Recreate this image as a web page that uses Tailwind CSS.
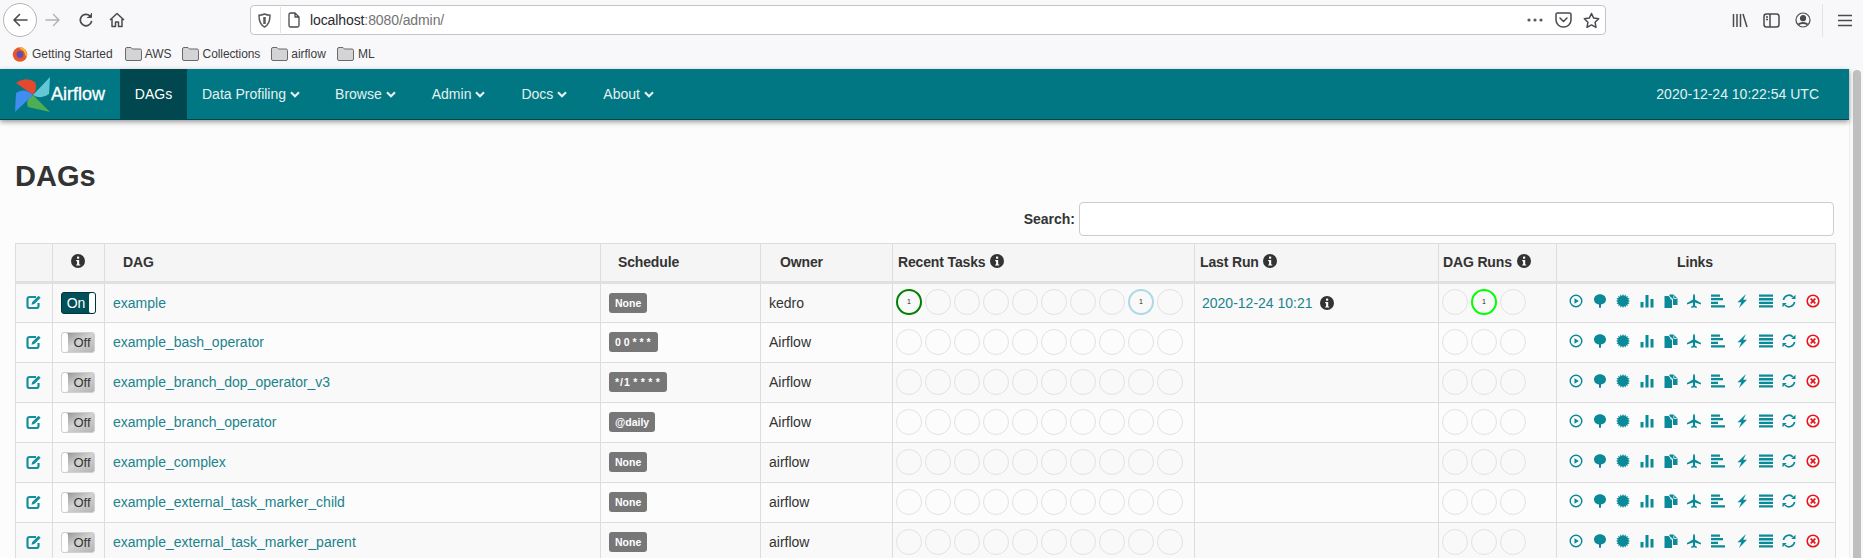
<!doctype html>
<html>
<head>
  <meta charset="UTF-8">
  <title>Airflow - DAGs</title>
  <script src="https://cdn.jsdelivr.net/npm/@tailwindcss/browser@4"></script>
</head>
<body class="w-[1863px] h-[558px] overflow-hidden bg-[#fcfcfc] text-[#333] text-[14px] font-['Liberation_Sans',Arial,sans-serif]">

  <!-- browser chrome -->
  <div class="h-[69px] bg-[#f8f8fa] text-[#4a4a4f]">
    <div class="h-[40px] flex items-center relative">
      <div class="absolute left-[3px] top-[3px] w-[34px] h-[34px] rounded-full border border-[#b5b5b8] bg-white"></div>
      <svg class="absolute left-[12px] top-[12px]" width="16" height="16" viewBox="0 0 16 16" fill="none" stroke="#4a4a4f" stroke-width="1.6" stroke-linecap="round" stroke-linejoin="round"><path d="M15 8H2M7.5 2.5 2 8l5.500 5.500"/></svg>
      <svg class="ml-[45px]" width="16" height="16" viewBox="0 0 16 16" fill="none" stroke="#b1b1b3" stroke-width="1.4" stroke-linecap="round" stroke-linejoin="round"><path d="M1 8h13M8.500 2.500 14 8l-5.500 5.500"/></svg>
      <svg class="ml-[17px]" width="16" height="16" viewBox="0 0 16 16" fill="none" stroke="#4a4a4f" stroke-width="1.700" stroke-linecap="round" stroke-linejoin="round"><path d="M13.500 9.500A5.700 5.700 0 1 1 12 4"/><path d="M13.500 1.500V5.500H9.500" fill="#4a4a4f" stroke-width="1"/></svg>
      <svg class="ml-[15px]" width="16" height="16" viewBox="0 0 16 16" fill="none" stroke="#4a4a4f" stroke-width="1.500" stroke-linejoin="round"><path d="M1 8 8 1.500 15 8M3 7v7.500h3.500V10h3v4.500H13V7"/></svg>
      <!-- url bar -->
      <div class="ml-[125px] w-[1356px] h-[30px] flex items-center bg-white border border-[#c4c4c6] rounded-[4px]">
        <svg class="ml-[7px]" width="13" height="15" viewBox="0 0 13 15" fill="none" stroke="#5a5a5e" stroke-width="1.500"><path d="M6.500 1C4.500 2 2.500 2.200 1 2.200 1 8 2.500 12 6.500 14 10.500 12 12 8 12 2.200 10.500 2.200 8.500 2 6.500 1Z"/><path d="M6.500 4v7" stroke-width="2.500"/></svg>
        <div class="ml-[9px] w-px h-[26px] bg-[#e4e4e6]"></div>
        <svg class="ml-[7px]" width="12" height="16" viewBox="0 0 12 16" fill="none" stroke="#4a4a4f" stroke-width="1.300" stroke-linejoin="round"><path d="M1 2.500A1.500 1.500 0 0 1 2.500 1H7l4 4v8.500a1.500 1.500 0 0 1-1.500 1.500h-7A1.500 1.500 0 0 1 1 13.500ZM7 1v4h4"/></svg>
        <span class="ml-[10px] text-[#2a2a2e] tracking-[-0.1px]">localhost<span class="text-[#737373]">:8080/admin/</span></span>
        <div class="ml-auto flex items-center">
          <svg width="18" height="4" viewBox="0 0 18 4" fill="#5a5a5e"><circle cx="3" cy="2" r="1.600"/><circle cx="9" cy="2" r="1.600"/><circle cx="15" cy="2" r="1.600"/></svg>
          <svg class="ml-[11px]" width="17" height="16" viewBox="0 0 17 16" fill="none" stroke="#4a4a4f" stroke-width="1.500" stroke-linejoin="round" stroke-linecap="round"><path d="M1 2.500A1.500 1.500 0 0 1 2.500 1h12A1.500 1.500 0 0 1 16 2.500V8a7.500 7 0 0 1-15 0Z"/><path d="m5 6 3.500 3.500L12 6"/></svg>
          <svg class="ml-[11px] mr-[5px]" width="17" height="17" viewBox="0 0 17 17" fill="none" stroke="#4a4a4f" stroke-width="1.500" stroke-linejoin="round"><path d="m8.500 1.500 2.200 4.600 5 .7-3.600 3.500.9 5-4.500-2.400L4 15.300l.9-5L1.300 6.800l5-.7Z"/></svg>
        </div>
      </div>
      <!-- toolbar right -->
      <svg class="ml-[126px]" width="16" height="15" viewBox="0 0 16 15" fill="none" stroke="#4a4a4f" stroke-width="1.500"><path d="M1.500 1v13M5 1v13M8.500 1v13M11 1l4 13"/></svg>
      <svg class="ml-[15px]" width="17" height="15" viewBox="0 0 17 15" fill="none" stroke="#4a4a4f" stroke-width="1.500"><rect x="1" y="1" width="15" height="13" rx="2.500"/><path d="M7 1v13M3 4h2M3 6.500h2"/></svg>
      <svg class="ml-[15px]" width="16" height="16" viewBox="0 0 16 16" fill="none" stroke="#4a4a4f" stroke-width="1.200"><circle cx="8" cy="8" r="7"/><circle cx="8" cy="6.200" r="2.500" fill="#4a4a4f"/><path d="M3.500 12.500C5.500 10.500 10.500 10.500 12.500 12.500" stroke-width="1.800"/></svg>
      <div class="ml-[11px] w-px h-[33px] bg-[#e4e4e6]"></div>
      <svg class="ml-[15px]" width="14" height="13" viewBox="0 0 14 13" fill="none" stroke="#4a4a4f" stroke-width="1.600"><path d="M0 1.500h14M0 6.500h14M0 11.500h14"/></svg>
    </div>
    <div class="h-[27px] flex items-center text-[12px] text-[#3c3c40]">
      <svg class="ml-[12px]" width="16" height="16" viewBox="0 0 15 15"><circle cx="7.500" cy="8" r="6.800" fill="#e8562a"/><path d="M7.500 1C11 1 14 4 14 8c0 1-.2 2-.6 2.800L11 5 7 2Z" fill="#ffb32c"/><circle cx="7.500" cy="8" r="3.200" fill="#5b4fb8"/></svg>
      <span class="ml-[4px]">Getting Started</span>
      <svg class="ml-[12px]" width="17" height="14" viewBox="0 0 17 14"><path d="M.5 2A1.500 1.500 0 0 1 2 .5h4l1.500 1.500H15A1.500 1.500 0 0 1 16.500 3.500V12A1.500 1.500 0 0 1 15 13.500H2A1.500 1.500 0 0 1 .5 12Z" fill="#d4d4d6" stroke="#6a6a6e"/></svg>
      <span class="ml-[3px]">AWS</span>
      <svg class="ml-[10px]" width="17" height="14" viewBox="0 0 17 14"><path d="M.5 2A1.500 1.500 0 0 1 2 .5h4l1.500 1.500H15A1.500 1.500 0 0 1 16.500 3.500V12A1.500 1.500 0 0 1 15 13.500H2A1.500 1.500 0 0 1 .5 12Z" fill="#d4d4d6" stroke="#6a6a6e"/></svg>
      <span class="ml-[4px] tracking-[-0.1px]">Collections</span>
      <svg class="ml-[11px]" width="17" height="14" viewBox="0 0 17 14"><path d="M.5 2A1.500 1.500 0 0 1 2 .5h4l1.500 1.500H15A1.500 1.500 0 0 1 16.500 3.500V12A1.500 1.500 0 0 1 15 13.500H2A1.500 1.500 0 0 1 .5 12Z" fill="#d4d4d6" stroke="#6a6a6e"/></svg>
      <span class="ml-[3px]">airflow</span>
      <svg class="ml-[11px]" width="17" height="14" viewBox="0 0 17 14"><path d="M.5 2A1.500 1.500 0 0 1 2 .5h4l1.500 1.500H15A1.500 1.500 0 0 1 16.500 3.500V12A1.500 1.500 0 0 1 15 13.500H2A1.500 1.500 0 0 1 .5 12Z" fill="#d4d4d6" stroke="#6a6a6e"/></svg>
      <span class="ml-[4px]">ML</span>
    </div>
  </div>

  <div class="flex h-[489px]">
    <main class="w-[1849px] shrink-0">
      <!-- navbar -->
      <nav class="relative h-[51px] flex items-stretch bg-[#007782] border-b border-[#00484f] text-[#e4f0f1] shadow-[0_2px_5px_rgba(0,0,0,0.4)]">
        <a class="w-[120px] flex items-center text-white">
          <svg class="ml-[15px] shrink-0" width="35" height="35" viewBox="0 0 35 35">
            <path d="M18 18 1 6Q11-1 20 5q3 6-2 13Z" fill="#e2492f"/>
            <path d="M18 18 35 0l-1 17q-8 6-16 1Z" fill="#62c8d8"/>
            <path d="M18 18 35 35l-22-5q-3-7 5-12Z" fill="#4fae55"/>
            <path d="M18 18 0 35l1-19q8-6 17 2Z" fill="#3f8df0"/>
          </svg>
          <span class="ml-[1px] text-[18px] text-white [-webkit-text-stroke:0.3px_white]">Airflow</span>
        </a>
        <a class="w-[67px] flex items-center justify-center bg-[#00474f] text-white">DAGs</a>
        <a class="flex items-center pl-[15px] pr-[20px]">Data Profiling<svg class="ml-[4px]" width="10" height="7" viewBox="0 0 10 7" fill="none" stroke="currentColor" stroke-width="2.200"><path d="m1 1.200 4 4 4-4"/></svg></a>
        <a class="flex items-center pl-[15px] pr-[21px]">Browse<svg class="ml-[4px]" width="10" height="7" viewBox="0 0 10 7" fill="none" stroke="currentColor" stroke-width="2.200"><path d="m1 1.200 4 4 4-4"/></svg></a>
        <a class="flex items-center pl-[15px] pr-[21px]">Admin<svg class="ml-[4px]" width="10" height="7" viewBox="0 0 10 7" fill="none" stroke="currentColor" stroke-width="2.200"><path d="m1 1.200 4 4 4-4"/></svg></a>
        <a class="flex items-center pl-[15px] pr-[21px]">Docs<svg class="ml-[4px]" width="10" height="7" viewBox="0 0 10 7" fill="none" stroke="currentColor" stroke-width="2.200"><path d="m1 1.200 4 4 4-4"/></svg></a>
        <a class="flex items-center pl-[15px] pr-[21px]">About<svg class="ml-[4px]" width="10" height="7" viewBox="0 0 10 7" fill="none" stroke="currentColor" stroke-width="2.200"><path d="m1 1.200 4 4 4-4"/></svg></a>
        <span class="ml-auto mr-[30px] flex items-center">2020-12-24 10:22:54 UTC</span>
      </nav>

      <div class="pl-[15px] pr-[15px]">
        <h2 class="mt-[38px] h-[36px] leading-[36px] text-[29px] font-bold">DAGs</h2>
        <div class="mt-[8px] flex items-center justify-end">
          <label class="font-bold mr-[4px]">Search:</label>
          <input class="w-[755px] h-[34px] bg-white border border-[#ccc] rounded-[4px]">
        </div>
        <table class="mt-[7px] w-[1820px] table-fixed border-collapse">
          <colgroup>
            <col class="w-[37px]"><col class="w-[52px]"><col class="w-[496px]"><col class="w-[160px]"><col class="w-[132px]"><col class="w-[302px]"><col class="w-[244px]"><col class="w-[118px]"><col class="w-[279px]">
          </colgroup>
          <thead class="bg-[#f5f5f5]">
            <tr class="h-[39px] text-left font-bold tracking-[-0.15px]">
              <th class="border border-[#ddd] border-b-[3px] border-b-[#e0e0e0]"></th>
              <th class="border border-[#ddd] border-b-[3px] border-b-[#e0e0e0] text-center pr-[2px]"><svg class="inline-block align-[-1px]" width="14" height="14" viewBox="0 0 14 14"><use href="#info"/></svg></th>
              <th class="border border-[#ddd] border-b-[3px] border-b-[#e0e0e0] pl-[18px]">DAG</th>
              <th class="border border-[#ddd] border-b-[3px] border-b-[#e0e0e0] pl-[17px]">Schedule</th>
              <th class="border border-[#ddd] border-b-[3px] border-b-[#e0e0e0] pl-[19px]">Owner</th>
              <th class="border border-[#ddd] border-b-[3px] border-b-[#e0e0e0] pl-[5px]">Recent Tasks <svg class="inline-block align-[-1px] ml-[1px]" width="14" height="14" viewBox="0 0 14 14"><use href="#info"/></svg></th>
              <th class="border border-[#ddd] border-b-[3px] border-b-[#e0e0e0] pl-[5px]">Last Run <svg class="inline-block align-[-1px] ml-[1px]" width="14" height="14" viewBox="0 0 14 14"><use href="#info"/></svg></th>
              <th class="border border-[#ddd] border-b-[3px] border-b-[#e0e0e0] pl-[4px]">DAG Runs <svg class="inline-block align-[-1px] ml-[1px]" width="14" height="14" viewBox="0 0 14 14"><use href="#info"/></svg></th>
              <th class="border border-[#ddd] border-b-[3px] border-b-[#e0e0e0] text-center pr-[2px]">Links</th>
            </tr>
          </thead>
          <tbody id="rows"></tbody>
        </table>
      </div>
    </main>
    <!-- scrollbar -->
    <div class="w-[14px] bg-[#f8f8f8] border-l border-[#efefef] pl-[3px] pt-[1px]">
      <div class="w-[8px] h-[500px] rounded-full bg-[#bfbfbf]"></div>
    </div>
  </div>

  <!-- icon defs -->
  <svg width="0" height="0" class="absolute">
    <defs>
      <symbol id="info" viewBox="0 0 14 14">
        <circle cx="7" cy="7" r="7" fill="#333"/>
        <rect x="6" y="2.600" width="2.200" height="2.100" fill="#fff"/>
        <path d="M5.200 6h3v4.400h1v1.200H5.200v-1.200h.9V7.200h-.9Z" fill="#fff"/>
      </symbol>
      <symbol id="edit" viewBox="0 0 16 16">
        <path d="M10 3H3.500A2 2 0 0 0 1.500 5v7a2 2 0 0 0 2 2H10.500a2 2 0 0 0 2-2V9" fill="none" stroke="#14909b" stroke-width="2.200"/>
        <path d="M5.500 10.800 6.200 8 12.500 1.800l2.200 2-6.300 6.300Z" fill="#14909b"/>
      </symbol>
      <symbol id="i-play" viewBox="0 0 14 14"><circle cx="7" cy="7" r="5.800" fill="none" stroke="currentColor" stroke-width="1.400"/><path d="M5.500 4.200 9.800 7l-4.300 2.800Z" fill="currentColor"/></symbol>
      <symbol id="i-tree" viewBox="0 0 14 14"><path d="M7 .2c3.500 0 6 2.500 6 5.200 0 2.800-2.300 4.800-5 5v3.300H6v-3.300C3.300 10.200 1 8.200 1 5.400 1 2.700 3.500.2 7 .2Z" fill="currentColor"/></symbol>
      <symbol id="i-burst" viewBox="0 0 14 14"><polygon points="7,0 8.01,1.9 9.68,.53 9.89,2.68 11.95,2.05 11.32,4.11 13.47,4.32 12.1,5.99 14,7 12.1,8.01 13.47,9.68 11.32,9.89 11.95,11.95 9.89,11.32 9.68,13.47 8.01,12.1 7,14 5.99,12.1 4.32,13.47 4.11,11.32 2.05,11.95 2.68,9.89 .53,9.68 1.9,8.01 0,7 1.9,5.99 .53,4.32 2.68,4.11 2.05,2.05 4.11,2.68 4.32,.53 5.99,1.9" fill="currentColor"/></symbol>
      <symbol id="i-bars" viewBox="0 0 14 14"><path d="M.5 8h3v5.500h-3ZM5.500 1h3v12.500h-3ZM10.500 5h3v8.500h-3Z" fill="currentColor"/></symbol>
      <symbol id="i-files" viewBox="0 0 14 14"><path d="M.5 2h4l2 2v1.500H8v8.500H.5Z M5.500 .5H9.500L13.500 4.500V11H9V5L5.500 2Z" fill="currentColor"/><path d="M9.800 1.500v3h3" fill="none" stroke="#fafafa" stroke-width=".8"/></symbol>
      <symbol id="i-plane" viewBox="0 0 14 14"><path d="M7 0C7.800 0 8 1.500 8 3v2.500L14 9v1.400L8 8.600V11.500l1.800 1.300V14L7 13.300 4.200 14v-1.200L6 11.500V8.600L0 10.400V9l6-3.500V3C6 1.500 6.200 0 7 0Z" fill="currentColor"/></symbol>
      <symbol id="i-align" viewBox="0 0 14 14"><path d="M0 .5h9v2.200H0ZM0 4.100h12v2.200H0ZM0 7.700h7v2.200H0ZM0 11.300h14v2.200H0Z" fill="currentColor"/></symbol>
      <symbol id="i-bolt" viewBox="0 0 14 14"><path d="M11 0 2.500 8.200h3.800L4 14l8-8.200H8.200Z" fill="currentColor"/></symbol>
      <symbol id="i-list" viewBox="0 0 14 14"><path d="M0 .5h14v2.300H0ZM0 4.100h14v2.300H0ZM0 7.700h14V10H0ZM0 11.300h14v2.300H0Z" fill="currentColor"/></symbol>
      <symbol id="i-sync" viewBox="0 0 14 14"><path d="M1.500 6A5.500 5.500 0 0 1 11 3M12.500 8A5.500 5.500 0 0 1 3 11" fill="none" stroke="currentColor" stroke-width="1.700"/><path d="M13.500.8V5H9.300ZM.5 13.200V9h4.200Z" fill="currentColor"/></symbol>
      <symbol id="i-x" viewBox="0 0 14 14"><circle cx="7" cy="7" r="5.800" fill="none" stroke="currentColor" stroke-width="1.600"/><path d="m4.700 4.700 4.600 4.600m0-4.600L4.700 9.300" fill="none" stroke="currentColor" stroke-width="1.800"/></symbol>
    </defs>
  </svg>

  <script>
    const dags = [
      ['example', 'None', 'kedro', ''],
      ['example_bash_operator', '0 0 * * *', 'Airflow', 'tracking-[1px] [word-spacing:-2px]'],
      ['example_branch_dop_operator_v3', '*/1 * * * *', 'Airflow', 'tracking-[1px] [word-spacing:-1.500px]'],
      ['example_branch_operator', '@daily', 'Airflow', ''],
      ['example_complex', 'None', 'airflow', ''],
      ['example_external_task_marker_child', 'None', 'airflow', ''],
      ['example_external_task_marker_parent', 'None', 'airflow', ''],
    ];

    const emptyCircle = '<div class="w-[26px] h-[26px] shrink-0 rounded-full border border-[#e2e2e2]"></div>';
    const countCircle = (cls) => `<div class="w-[26px] h-[26px] shrink-0 rounded-full border-2 ${cls} flex items-center justify-center text-[7px] text-[#222]">1</div>`;
    const icons = ['i-play', 'i-tree', 'i-burst', 'i-bars', 'i-files', 'i-plane', 'i-align', 'i-bolt', 'i-list', 'i-sync'];

    document.getElementById('rows').innerHTML = dags.map((d, i) => {
      const first = i === 0;
      const tasks = Array.from({length: 10}, (_, n) => {
        if (first && n === 0) return countCircle('border-[#008000]');
        if (first && n === 8) return countCircle('border-[#add8e6]');
        return emptyCircle;
      }).join('');
      const runs = [0, 1, 2].map(n => first && n === 1 ? countCircle('border-[#00ff00]') : emptyCircle).join('');
      const toggle = first
        ? `<div class="w-[35px] h-[22px] flex rounded-[3px] border border-[#00353b] bg-[#00505a] text-white overflow-hidden"><span class="flex-1 flex items-center justify-center pl-[1px]">On</span><span class="w-[6px] bg-white rounded-l-[2px]"></span></div>`
        : `<div class="w-[34px] h-[21px] flex rounded-[3px] border border-[#d0d0d0] bg-linear-to-br from-[#8c8c8c] via-[#d2d2d2] to-[#b4b4b4] overflow-hidden"><span class="w-[6px] bg-white rounded-r-[2px]"></span><span class="flex-1 flex items-center justify-center pl-[2px] pt-[1px] text-[13px] text-[#333]">Off</span></div>`;
      return `
        <tr class="h-[40px] ${i % 2 === 0 ? 'bg-[#f9f9f9]' : 'bg-[#fcfcfc]'}">
          <td class="border border-[#ddd] text-center"><svg class="inline-block -mt-[3px]" width="16" height="16"><use href="#edit"/></svg></td>
          <td class="border border-[#ddd]"><div class="ml-[8px]">${toggle}</div></td>
          <td class="border border-[#ddd] pl-[8px] text-[#1b838d]">${d[0]}</td>
          <td class="border border-[#ddd] pl-[8px]"><span class="inline-block -translate-y-px h-[20px] leading-[20px] px-[6px] rounded-[3px] bg-[#777] text-white text-[10.500px] font-bold whitespace-pre ${d[3]}">${d[1]}</span></td>
          <td class="border border-[#ddd] pl-[8px]">${d[2]}</td>
          <td class="border border-[#ddd] pl-[3px]"><div class="flex gap-[3px] -mt-[2px]">${tasks}</div></td>
          <td class="border border-[#ddd] pl-[7px]">${first ? '<span class="text-[#1b838d]">2020-12-24 10:21</span><svg class="inline-block ml-[7px] align-[-2px]" width="14" height="14"><use href="#info"/></svg>' : ''}</td>
          <td class="border border-[#ddd] pl-[3px]"><div class="flex gap-[3px] -mt-[2px]">${runs}</div></td>
          <td class="border border-[#ddd] pl-[12px]">
            <div class="flex gap-[9.700px] -mt-[4px] text-[#0a8a98]">
              ${icons.map(id => `<svg width="14" height="14"><use href="#${id}"/></svg>`).join('')}
              <svg class="text-[#e8141c]" width="14" height="14"><use href="#i-x"/></svg>
            </div>
          </td>
        </tr>`;
    }).join('');
  </script>
</body>
</html>
